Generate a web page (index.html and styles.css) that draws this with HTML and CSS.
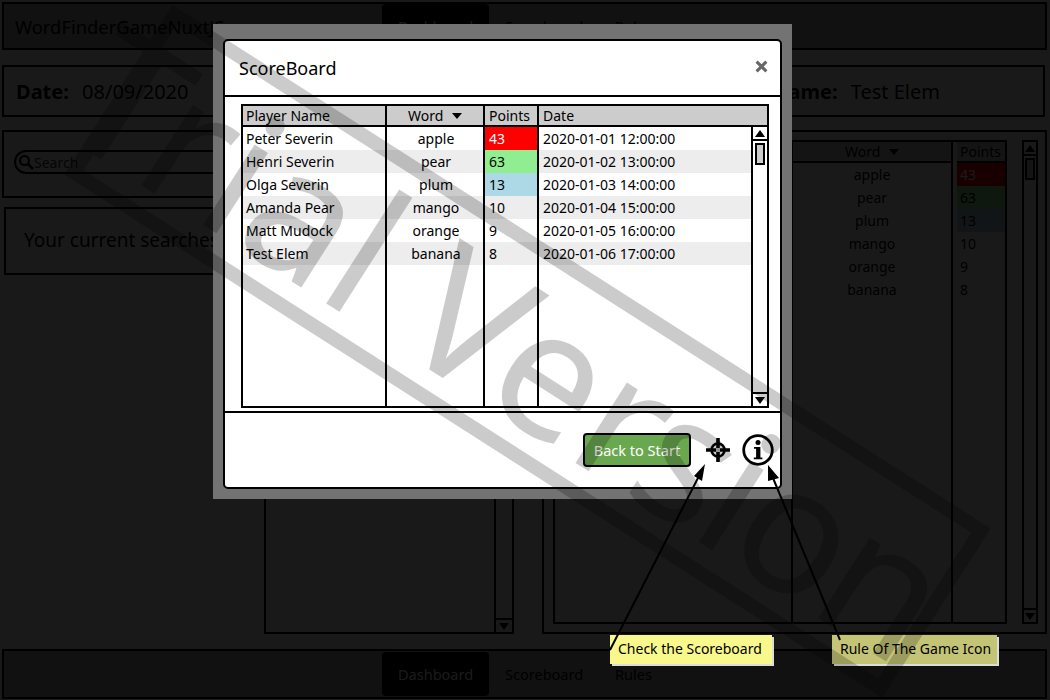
FILE: index.html
```html
<!DOCTYPE html>
<html lang="en">
<head>
    <meta charset="UTF-8">
    <title>WordFinderGameNuxtJS</title>
    <link rel="stylesheet" href="styles.css">
</head>
<body>
    <div class="page">
        <!-- Top bar -->
        <header class="navbar">
            <span class="brand">WordFinderGameNuxtJS</span>
            <nav class="nav-links">
                <a class="nav-link active">Dashboard</a>
                <a class="nav-link">Scoreboard</a>
                <a class="nav-link">Rules</a>
            </nav>
        </header>

        <section class="info-bar">
            <span class="info-item"><b>Date:</b> 08/09/2020</span>
            <span class="info-item"><b>Username:</b> Test Elem</span>
        </section>

        <section class="main-area">
            <div class="left-col">
                <div class="search-panel">
                    <div class="search-box">
                        <svg class="search-icon" viewBox="0 0 16 16"><circle cx="6.5" cy="6.5" r="4.5" fill="none" stroke="#000" stroke-width="2"/><path d="M10 10l5 5" stroke="#000" stroke-width="2.5"/></svg>
                        <span>Search</span>
                    </div>
                </div>
                <div class="searches-panel">Your current searches:</div>
            </div>
            <div class="center-col">
                <div class="list-box">
                    <div class="scroll-track dark-track">
                        <span class="arrow up"></span>
                        <span class="grow"></span>
                        <span class="arrow down"></span>
                    </div>
                </div>
            </div>
            <div class="right-col">
                <div class="back-table">
                    <div class="back-col">
                        <div class="back-head">Player Name</div>
                    </div>
                    <div class="back-col word">
                        <div class="back-head">Word <i class="caret"></i></div>
                        <div class="back-cell">apple</div>
                        <div class="back-cell">pear</div>
                        <div class="back-cell">plum</div>
                        <div class="back-cell">mango</div>
                        <div class="back-cell">orange</div>
                        <div class="back-cell">banana</div>
                    </div>
                    <div class="back-col points">
                        <div class="back-head">Points</div>
                        <div class="back-cell red">43</div>
                        <div class="back-cell green">63</div>
                        <div class="back-cell blue">13</div>
                        <div class="back-cell">10</div>
                        <div class="back-cell">9</div>
                        <div class="back-cell">8</div>
                    </div>
                </div>
                <div class="scroll-track right-track">
                    <span class="arrow up"></span>
                    <span class="thumb"></span>
                    <span class="grow"></span>
                    <span class="arrow down"></span>
                </div>
            </div>
        </section>

        <footer class="navbar footer">
            <nav class="nav-links">
                <a class="nav-link active">Dashboard</a>
                <a class="nav-link">Scoreboard</a>
                <a class="nav-link">Rules</a>
            </nav>
        </footer>
    </div>

    <!-- dark layer + modal -->
    <div class="overlay"></div>
    <div class="modal-halo">
        <div class="modal">
            <div class="modal-header">
                <h2>ScoreBoard</h2>
                <svg class="close" viewBox="0 0 12 12"><path d="M1.5 1.5l9 9M10.5 1.5l-9 9" stroke="#666" stroke-width="2.8"/></svg>
            </div>
            <div class="modal-body">
                <div class="table">
                    <div class="table-head">
                        <div class="th name">Player Name</div>
                        <div class="th word">Word <i class="caret"></i></div>
                        <div class="th points">Points</div>
                        <div class="th date">Date</div>
                    </div>
                    <div class="table-body">
                        <div class="rows">
                            <div class="row"><span class="td name">Peter Severin</span><span class="td word">apple</span><span class="td points red">43</span><span class="td date">2020-01-01 12:00:00</span></div>
                            <div class="row alt"><span class="td name">Henri Severin</span><span class="td word">pear</span><span class="td points green">63</span><span class="td date">2020-01-02 13:00:00</span></div>
                            <div class="row"><span class="td name">Olga Severin</span><span class="td word">plum</span><span class="td points blue">13</span><span class="td date">2020-01-03 14:00:00</span></div>
                            <div class="row alt"><span class="td name">Amanda Pear</span><span class="td word">mango</span><span class="td points">10</span><span class="td date">2020-01-04 15:00:00</span></div>
                            <div class="row"><span class="td name">Matt Mudock</span><span class="td word">orange</span><span class="td points">9</span><span class="td date">2020-01-05 16:00:00</span></div>
                            <div class="row alt"><span class="td name">Test Elem</span><span class="td word">banana</span><span class="td points">8</span><span class="td date">2020-01-06 17:00:00</span></div>
                            <div class="col-lines"><i class="line-a"></i><i class="line-b"></i><i class="line-c"></i></div>
                        </div>
                        <div class="scroll-track modal-track">
                            <span class="arrow up"></span>
                            <span class="thumb"></span>
                            <span class="grow"></span>
                            <span class="arrow down"></span>
                        </div>
                    </div>
                </div>
            </div>
            <div class="modal-footer">
                <button class="btn-back">Back to Start</button>
                <svg class="target-icon" viewBox="0 0 24 24">
                    <circle cx="12" cy="12" r="6.5" fill="none" stroke="#000" stroke-width="2.6"/>
                    <path d="M12 0v10M12 14v10M0 12h10M14 12h10" stroke="#000" stroke-width="3.6"/>
                    <path d="M10 10h4v4h-4z" fill="#bbb"/>
                </svg>
                <svg class="info-icon" viewBox="0 0 32 32">
                    <circle cx="16" cy="16" r="14.3" fill="none" stroke="#000" stroke-width="2.8"/>
                    <circle cx="16" cy="8.6" r="2.5"/>
                    <path d="M12 13h6.4v10.4h2v1.8h-8.6v-1.8h2.3v-8.6h-2.1z"/>
                </svg>
            </div>
        </div>
    </div>

    <!-- annotations -->
    <div class="note note-one">Check the Scoreboard</div>
    <div class="note note-two">Rule Of The Game Icon</div>
    <svg class="arrows" viewBox="0 0 1050 700">
        <path d="M610 650L699 476M840 640L773 478" stroke="#000" stroke-width="2" fill="none"/>
        <path d="M705 464l-11 12 8 5zM768 465v16l11-3z"/>
    </svg>

    <!-- watermark -->
    <svg class="watermark" viewBox="0 0 1050 700">
        <g transform="translate(527.5 351.5) rotate(32.6)">
            <rect x="-478.5" y="-93.5" width="957" height="187" fill="none" stroke="#000" stroke-width="14"/>
            <text x="-520" y="68">Trial Ve<tspan class="tight">rsion</tspan></text>
        </g>
    </svg>
</body>
</html>
```

FILE: styles.css
```css
/* General */
body {
    margin: 0;
    width: 1050px;
    height: 700px;
    overflow: hidden;
    font-family: "Noto Sans", sans-serif;
    color: #000;
    background: #fff;
}

.page {
    height: 700px;
    box-sizing: border-box;
    padding: 2px 3px 1px 2px;
    display: flex;
    flex-direction: column;
}

/* Nav bars */
.navbar {
    height: 48px;
    flex: none;
    box-sizing: border-box;
    border: 2px solid #000;
    display: flex;
    align-items: center;
    padding-left: 11px;
    background: #a8a8a8;
}

.brand {
    width: 367px;
    font-size: 18.4px;
}

.nav-links {
    display: flex;
    height: 100%;
    align-items: center;
    font-size: 14.5px;
}

.nav-link {
    padding: 0 16px;
    height: 44px;
    line-height: 44px;
}

.nav-link.active {
    background: #000;
    color: #fff;
    border-radius: 4px;
}

.footer {
    height: 50px;
    margin-top: 15px;
    padding-left: 378px;
}

/* Info bar */
.info-bar {
    margin-top: 15px;
    margin-right: 2px;
    height: 52px;
    flex: none;
    box-sizing: border-box;
    border: 2px solid #000;
    padding: 0 12px;
    display: flex;
    justify-content: space-between;
    align-items: center;
    font-size: 20px;
}

.info-item {
    width: 50%;
}

.info-item + .info-item {
    text-align: right;
    padding-right: 91px;
}

.info-item b {
    margin-right: 8px;
}

/* Main */
.main-area {
    flex: 1;
    display: flex;
    margin-top: 13px;
    min-height: 0;
}

.left-col {
    width: 250px;
    flex: none;
}

.search-panel {
    height: 68px;
    box-sizing: border-box;
    border: 2px solid #000;
    padding: 18px 10px;
}

.search-box {
    height: 24px;
    width: 400px;
    box-sizing: border-box;
    border: 2px solid #000;
    border-radius: 12px;
    display: flex;
    align-items: center;
    padding-left: 2px;
    font-size: 14px;
    color: #333;
}

.search-icon {
    width: 16px;
    height: 16px;
}

.searches-panel {
    margin: 9px 0 0 2px;
    height: 68px;
    width: 400px;
    box-sizing: border-box;
    border: 2px solid #000;
    padding: 0 18px;
    line-height: 62px;
    font-size: 19px;
    white-space: nowrap;
}

.center-col {
    width: 250px;
    flex: none;
    margin-left: 12px;
    display: flex;
    justify-content: flex-end;
}

.list-box {
    width: 250px;
    box-sizing: border-box;
    border: 2px solid #000;
    display: flex;
    justify-content: flex-end;
}

.scroll-track {
    width: 18px;
    box-sizing: border-box;
    display: flex;
    flex-direction: column;
    align-items: center;
    flex: none;
}

.dark-track {
    border-left: 2px solid #000;
}

.grow {
    flex: 1;
}

.arrow {
    width: 100%;
    height: 14px;
    position: relative;
    display: block;
    box-sizing: border-box;
}

.arrow::after {
    content: "";
    position: absolute;
    left: 50%;
    margin-left: -5px;
    top: 3px;
    border-left: 5px solid transparent;
    border-right: 5px solid transparent;
}

.arrow.up {
    border-bottom: 2px solid #000;
}

.arrow.up::after {
    border-bottom: 7px solid #000;
}

.arrow.down {
    border-top: 2px solid #000;
}

.arrow.down::after {
    border-top: 7px solid #000;
}

.thumb {
    width: 10px;
    height: 22px;
    margin-top: 2px;
    box-sizing: border-box;
    border: 2px solid #000;
    background: #ccc;
}

.right-col {
    flex: 1;
    margin-left: 28px;
    box-sizing: border-box;
    border: 2px solid #000;
    display: flex;
    padding: 8px 7px 8px 9px;
    gap: 15px;
}

.back-table {
    flex: 1;
    display: flex;
    box-sizing: border-box;
    border: 2px solid #000;
    font-size: 14px;
}

.back-col {
    flex: 1;
    border-right: 2px solid #000;
}

.back-col.word {
    flex: none;
    width: 160px;
    text-align: center;
}

.back-col.points {
    flex: none;
    width: 52px;
    border-right: 0;
}

.back-head {
    height: 21px;
    line-height: 20px;
    box-sizing: border-box;
    border-bottom: 2px solid #000;
    background: #ccc;
    padding: 0 3px;
}

.back-cell {
    height: 23px;
    line-height: 23px;
    padding: 0 3px;
}

.right-track {
    width: 16px;
    border: 2px solid #000;
}

.caret {
    display: inline-block;
    margin-left: 5px;
    vertical-align: 2px;
    border-left: 5px solid transparent;
    border-right: 5px solid transparent;
    border-top: 6px solid #000;
}

.red {
    background: #f00;
    color: #fff;
}

.green {
    background: #90ee90;
}

.blue {
    background: #add8e6;
}

/* Overlay + modal */
.overlay {
    position: absolute;
    inset: 0;
    background: rgba(0, 0, 0, 0.9);
}

.modal-halo {
    position: absolute;
    left: 213px;
    top: 24px;
    width: 579px;
    height: 475px;
    box-sizing: border-box;
    padding: 15px 10px 10px;
    background: #737373;
}

.modal {
    height: 100%;
    box-sizing: border-box;
    background: #fff;
    border: 2px solid #000;
    border-radius: 5px;
    display: flex;
    flex-direction: column;
}

.modal-header {
    height: 56px;
    flex: none;
    box-sizing: border-box;
    border-bottom: 2px solid #000;
    display: flex;
    justify-content: space-between;
    align-items: center;
    padding: 0 12px 0 14px;
}

.modal-header h2 {
    margin: 0;
    font-size: 18px;
    font-weight: 400;
}

.close {
    width: 13px;
    height: 13px;
    margin-bottom: 3px;
}

.modal-body {
    height: 316px;
    flex: none;
    box-sizing: border-box;
    border-bottom: 2px solid #000;
    padding: 7px 11px 3px 16px;
}

.table {
    height: 100%;
    box-sizing: border-box;
    border: 2px solid #000;
    display: flex;
    flex-direction: column;
    font-size: 14px;
}

.table-head {
    height: 21px;
    flex: none;
    display: flex;
    box-sizing: border-box;
    background: #ccc;
    border-bottom: 2px solid #000;
}

.th {
    line-height: 19px;
    box-sizing: border-box;
}

.name {
    width: 144px;
    flex: none;
    padding-left: 3px;
    box-sizing: border-box;
    white-space: nowrap;
}

.word {
    width: 98px;
    flex: none;
    text-align: center;
    box-sizing: border-box;
}

.points {
    width: 54px;
    flex: none;
    padding-left: 4px;
    box-sizing: border-box;
}

.date {
    flex: 1;
    padding-left: 4px;
    white-space: nowrap;
}

.th.name, .th.word, .th.points {
    border-right: 2px solid #000;
}

.table-body {
    flex: 1;
    display: flex;
    min-height: 0;
}

.rows {
    flex: 1;
    position: relative;
}

.row {
    height: 23px;
    display: flex;
    line-height: 23px;
}

.row.alt {
    background: #ededed;
}

.col-lines i {
    position: absolute;
    top: 0;
    bottom: 0;
    width: 2px;
    background: #000;
}

.line-a {
    left: 142px;
}

.line-b {
    left: 240px;
}

.line-c {
    left: 294px;
}

.modal-track {
    width: 16px;
    border-left: 2px solid #000;
}

.modal-footer {
    flex: 1;
    display: flex;
    align-items: center;
    justify-content: flex-end;
    padding: 0 6px 0 0;
}

.btn-back {
    width: 108px;
    height: 34px;
    box-sizing: border-box;
    background: #6aa84f;
    color: #fff;
    border: 2px solid #000;
    border-radius: 4px;
    font-family: inherit;
    font-size: 14.5px;
    padding: 0;
}

.target-icon {
    width: 24px;
    height: 24px;
    margin: 0 12px 0 15px;
}

.info-icon {
    width: 32px;
    height: 32px;
}

/* Annotations */
.arrows, .watermark {
    position: absolute;
    left: 0;
    top: 0;
    width: 1050px;
    height: 700px;
    pointer-events: none;
}

.note {
    position: absolute;
    top: 635px;
    height: 29px;
    line-height: 28px;
    box-sizing: border-box;
    padding-left: 8px;
    font-size: 14px;
    white-space: nowrap;
    box-shadow: 2px 2px 0 #ddd;
}

.note-one {
    left: 610px;
    width: 162px;
    background: #f8f88c;
}

.note-two {
    left: 832px;
    width: 165px;
    background: #c4c477;
}

/* Watermark */
.watermark {
    opacity: 0.2;
}

.watermark text {
    font-family: "Noto Sans", sans-serif;
    font-size: 178px;
}

.watermark .tight {
    letter-spacing: -6px;
}
```
